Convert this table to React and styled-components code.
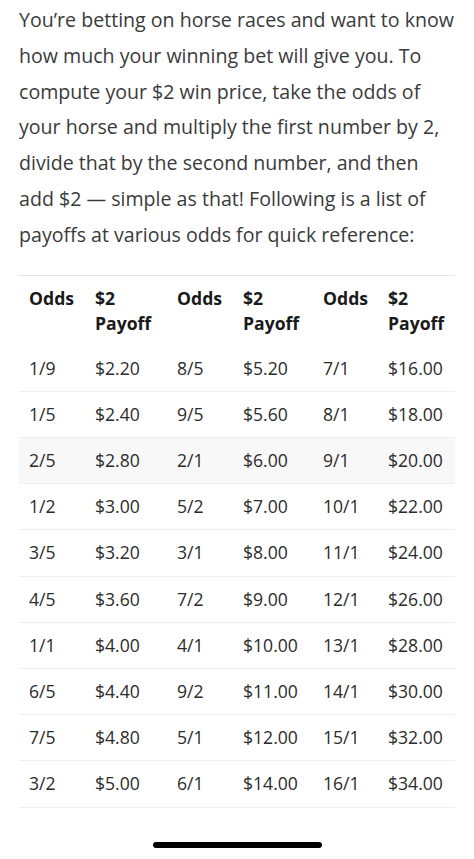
import React from 'react';
import styled, {createGlobalStyle} from 'styled-components';

//===
// Styles
//===

const GlobalStyle = createGlobalStyle`
    html, body {
        margin: 0;
        padding: 0;
        background: #ffffff;
    }
    body {
        font-family: "Open Sans", "Noto Sans", sans-serif;
        color: #333333;
    }
`

const Page = styled.main`
    padding: 2px 19px 0;
    display: flex;
    flex-direction: column;
`

const Intro = styled.p`
    margin: 0;
    font-size: 19.6px;
    line-height: 35.8px;
    color: #3a3a3a;
`

const OddsTable = styled.table`
    margin-top: 22px;
    width: 436px;
    border-collapse: collapse;
    table-layout: fixed;
    font-size: 17.6px;
    color: #2b2b2b;
    border-top: 1px solid #e3e3e3;
`

const HeadCell = styled.th`
    text-align: left;
    vertical-align: top;
    font-weight: 700;
    color: #1a1a1a;
    padding: 10px 10px 10px 10px;
    line-height: 25px;
`

const Row = styled.tr`
    background: ${props => props.shaded ? '#f8f8f8' : '#ffffff'};
    border-bottom: 1px solid #efefef;
`

const Cell = styled.td`
    padding: 10px 10px;
    line-height: 25.2px;
    white-space: nowrap;
`

const Footer = styled.div`
    display: flex;
    justify-content: center;
    padding: 34px 0 10px;
`

const HomeBar = styled.div`
    width: 169px;
    height: 6px;
    border-radius: 3px;
    background: #000000;
`

//===
// Data
//===

const rows = [
    ['1/9', '$2.20', '8/5', '$5.20', '7/1', '$16.00'],
    ['1/5', '$2.40', '9/5', '$5.60', '8/1', '$18.00'],
    ['2/5', '$2.80', '2/1', '$6.00', '9/1', '$20.00'],
    ['1/2', '$3.00', '5/2', '$7.00', '10/1', '$22.00'],
    ['3/5', '$3.20', '3/1', '$8.00', '11/1', '$24.00'],
    ['4/5', '$3.60', '7/2', '$9.00', '12/1', '$26.00'],
    ['1/1', '$4.00', '4/1', '$10.00', '13/1', '$28.00'],
    ['6/5', '$4.40', '9/2', '$11.00', '14/1', '$30.00'],
    ['7/5', '$4.80', '5/1', '$12.00', '15/1', '$32.00'],
    ['3/2', '$5.00', '6/1', '$14.00', '16/1', '$34.00'],
];

const widths = [66, 82, 66, 80, 65, 77];

//===
// Component
//===

const App = () => {
    return(
        <>
        <GlobalStyle />
        <Page>
            <Intro>
                You’re betting on horse races and want to know how much your winning bet will give you. To compute your $2 win price, take the odds of your horse and multiply the first number by 2, divide that by the second number, and then add $2 — simple as that! Following is a list of payoffs at various odds for quick reference:
            </Intro>
            <OddsTable>
                <colgroup>
                    {widths.map((w, i) => <col key={i} style={{width: w}} />)}
                </colgroup>
                <thead>
                    <tr>
                        <HeadCell>Odds</HeadCell>
                        <HeadCell>$2<br />Payoff</HeadCell>
                        <HeadCell>Odds</HeadCell>
                        <HeadCell>$2<br />Payoff</HeadCell>
                        <HeadCell>Odds</HeadCell>
                        <HeadCell>$2<br />Payoff</HeadCell>
                    </tr>
                </thead>
                <tbody>
                    {rows.map((r, i) => (
                        <Row key={i} shaded={i === 2}>
                            {r.map((c, j) => <Cell key={j}>{c}</Cell>)}
                        </Row>
                    ))}
                </tbody>
            </OddsTable>
            <Footer>
                <HomeBar />
            </Footer>
        </Page>
        </>)
};

export default App;
